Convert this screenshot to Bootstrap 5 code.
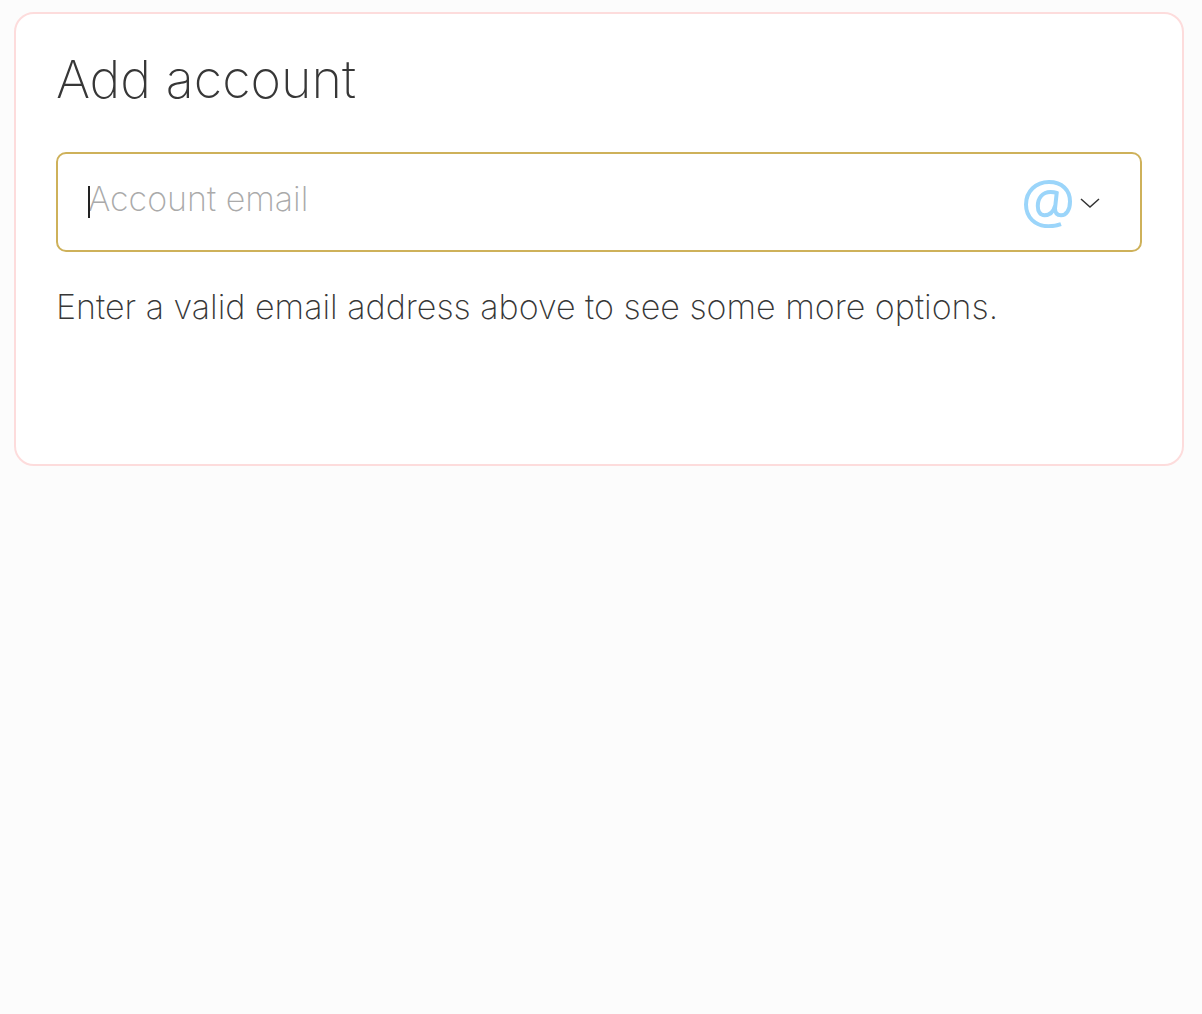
<!DOCTYPE html>
<html lang="en">
<head>
<meta charset="utf-8">
<meta name="viewport" content="width=device-width, initial-scale=1">
<title>Add account</title>
<link href="https://cdn.jsdelivr.net/npm/bootstrap@5.3.0/dist/css/bootstrap.min.css" rel="stylesheet">
<style>
body { background: #fcfcfc; color: #373737; font-family: Inter, "Open Sans", sans-serif; font-weight: 200; padding: 12px 18px 12px 14px; }
.account-card { border: 2px solid #fddcdc; border-radius: 20px; color: #373737; }
.account-card .card-body { padding: 36px 40px 134px; }
.account-title { font-size: 52px; line-height: 60px; font-weight: 200; margin-bottom: 42px; }
.email-field { height: 100px; border: 2px solid #ceb15a; border-radius: 10px; padding: 4px 40px 0 30px; margin-bottom: 32px; }
.email-field .form-control { font-size: 34px; line-height: 40px; font-weight: 200; color: #373737; padding: 0 0 10px; caret-color: transparent; }
.email-field .form-control:focus { box-shadow: none; }
.email-field .form-control::placeholder { color: #aaa; opacity: 1; }
.text-caret { left: 0; top: 7px; width: 2px; height: 32px; background: #222; }
.hint { font-size: 34px; line-height: 46px; }
</style>
</head>
<body>
<main class="card account-card bg-white">
  <form class="card-body">
    <h1 class="account-title">Add account</h1>
    <div class="email-field d-flex align-items-center">
      <div class="position-relative flex-grow-1">
        <input id="email" type="email" class="form-control border-0 rounded-0 bg-transparent" placeholder="Account email" aria-label="Account email" aria-describedby="hint">
        <span class="text-caret position-absolute" aria-hidden="true"></span>
      </div>
      <button type="button" class="btn border-0 p-0 d-flex align-items-center gap-2" aria-label="Choose account type">
        <svg width="48" height="48" viewBox="0 0 48 48" fill="none" stroke="#9bd5fa" stroke-width="4" aria-hidden="true">
          <path d="M37 44.200C32.500 45.800 28.500 46.200 24.500 46.200C11 46.200 2 37.200 2 24.500C2 11.200 12 2 25 2C38 2 46 10 46 21.500C46 30 42.300 35.200 37 35.200C32.800 35.200 31 32.500 31 28.500L32.700 13C30.500 12.200 28.500 12 26.500 12C18.500 12 13.800 18 13.800 26C13.800 32 16.500 35.200 20.500 35.200C26 35.200 29.500 31.500 31 26"/>
        </svg>
        <svg width="20" height="20" viewBox="0 0 20 20" fill="none" stroke="#333" stroke-width="1.500" aria-hidden="true">
          <path d="M1 5L10 13L19 5"/>
        </svg>
      </button>
    </div>
    <p id="hint" class="hint mb-0">Enter a valid email address above to see some more options.</p>
  </form>
</main>
<script src="https://cdn.jsdelivr.net/npm/bootstrap@5.3.0/dist/js/bootstrap.bundle.min.js"></script>
</body>
</html>
